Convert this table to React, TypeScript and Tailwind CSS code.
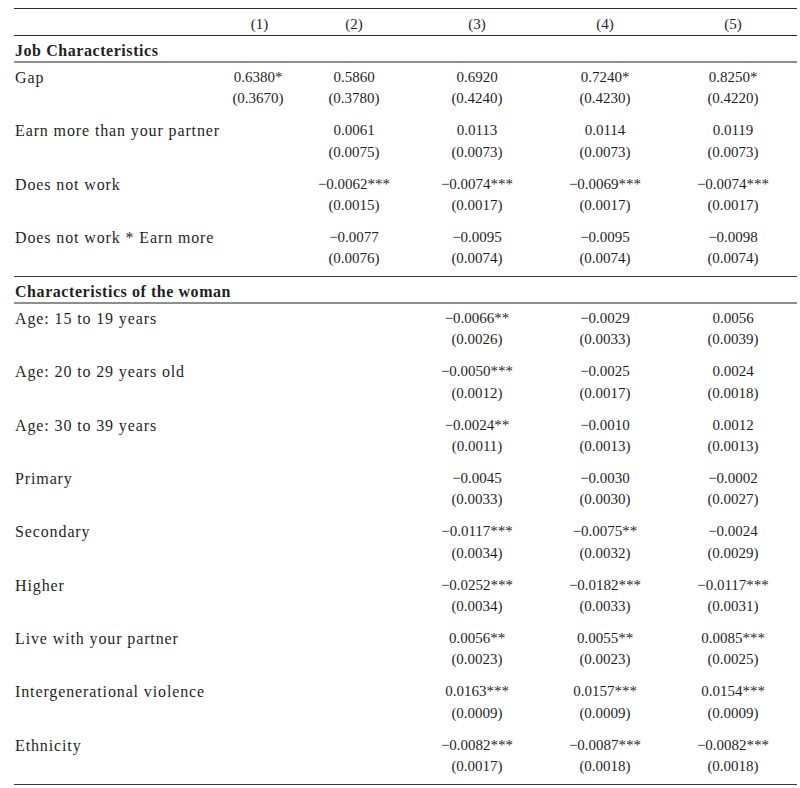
import React from 'react';

type Cell = [string, string] | null;

interface Row {
  label: string;
  cells: Cell[];
}

const jobRows: Row[] = [
  {
    label: 'Gap',
    cells: [
      ['0.6380*', '(0.3670)'],
      ['0.5860', '(0.3780)'],
      ['0.6920', '(0.4240)'],
      ['0.7240*', '(0.4230)'],
      ['0.8250*', '(0.4220)'],
    ],
  },
  {
    label: 'Earn more than your partner',
    cells: [
      null,
      ['0.0061', '(0.0075)'],
      ['0.0113', '(0.0073)'],
      ['0.0114', '(0.0073)'],
      ['0.0119', '(0.0073)'],
    ],
  },
  {
    label: 'Does not work',
    cells: [
      null,
      ['−0.0062***', '(0.0015)'],
      ['−0.0074***', '(0.0017)'],
      ['−0.0069***', '(0.0017)'],
      ['−0.0074***', '(0.0017)'],
    ],
  },
  {
    label: 'Does not work * Earn more',
    cells: [
      null,
      ['−0.0077', '(0.0076)'],
      ['−0.0095', '(0.0074)'],
      ['−0.0095', '(0.0074)'],
      ['−0.0098', '(0.0074)'],
    ],
  },
];

const womanRows: Row[] = [
  { label: 'Age: 15 to 19 years', cells: [null, null, ['−0.0066**', '(0.0026)'], ['−0.0029', '(0.0033)'], ['0.0056', '(0.0039)']] },
  { label: 'Age: 20 to 29 years old', cells: [null, null, ['−0.0050***', '(0.0012)'], ['−0.0025', '(0.0017)'], ['0.0024', '(0.0018)']] },
  { label: 'Age: 30 to 39 years', cells: [null, null, ['−0.0024**', '(0.0011)'], ['−0.0010', '(0.0013)'], ['0.0012', '(0.0013)']] },
  { label: 'Primary', cells: [null, null, ['−0.0045', '(0.0033)'], ['−0.0030', '(0.0030)'], ['−0.0002', '(0.0027)']] },
  { label: 'Secondary', cells: [null, null, ['−0.0117***', '(0.0034)'], ['−0.0075**', '(0.0032)'], ['−0.0024', '(0.0029)']] },
  { label: 'Higher', cells: [null, null, ['−0.0252***', '(0.0034)'], ['−0.0182***', '(0.0033)'], ['−0.0117***', '(0.0031)']] },
  { label: 'Live with your partner', cells: [null, null, ['0.0056**', '(0.0023)'], ['0.0055**', '(0.0023)'], ['0.0085***', '(0.0025)']] },
  { label: 'Intergenerational violence', cells: [null, null, ['0.0163***', '(0.0009)'], ['0.0157***', '(0.0009)'], ['0.0154***', '(0.0009)']] },
  { label: 'Ethnicity', cells: [null, null, ['−0.0082***', '(0.0017)'], ['−0.0087***', '(0.0018)'], ['−0.0082***', '(0.0018)']] },
];

// column widths picked so the centres land where the reference has them
const grid = 'grid grid-cols-[200px_88px_104px_142px_114px_135px]';

const DataRow: React.FC<{ row: Row }> = ({ row }) => (
  <div className={`${grid} h-[53.3px] pt-[4px]`}>
    <div className="pl-px text-[16px] leading-[21px] tracking-[0.055em] whitespace-nowrap">{row.label}</div>
    {row.cells.map((c, i) => (
      <div
        key={i}
        className={`flex flex-col items-center text-[15px] leading-[21.3px] whitespace-nowrap ${i === 4 ? 'pl-[7px]' : ''}`}
      >
        {c && (
          <>
            <span>{c[0]}</span>
            <span>{c[1]}</span>
          </>
        )}
      </div>
    ))}
  </div>
);

const SectionHead: React.FC<{ title: string }> = ({ title }) => (
  <>
    <div className="h-[25px] pt-[4px] pl-px text-[16px] leading-[21px] font-bold tracking-[0.035em] whitespace-nowrap">
      {title}
    </div>
    <div className="h-[2px] bg-[#8e8e8e]" />
  </>
);

export default function App() {
  return (
    <div className="min-h-[788px] bg-white pl-[14px] pt-[8px] text-[#1f1f1f] font-['Liberation_Serif',serif]">
      <div className="w-[783px]">
        <div className="h-px bg-[#2a2a2a]" />
        <div className={`${grid} h-[26px] pt-[5px] text-[15px] leading-[21px]`}>
          <div />
          <div className="text-center pl-[3px]">(1)</div>
          <div className="text-center">(2)</div>
          <div className="text-center">(3)</div>
          <div className="text-center">(4)</div>
          <div className="text-center pl-[7px]">(5)</div>
        </div>
        <div className="h-px bg-[#2a2a2a]" />

        <SectionHead title="Job Characteristics" />
        {jobRows.map((r) => (
          <DataRow key={r.label} row={r} />
        ))}

        <div className="h-px bg-[#3a3a3a]" />
        <SectionHead title="Characteristics of the woman" />
        {womanRows.map((r) => (
          <DataRow key={r.label} row={r} />
        ))}
        <div className="h-px bg-[#3a3a3a]" />
      </div>
    </div>
  );
}
